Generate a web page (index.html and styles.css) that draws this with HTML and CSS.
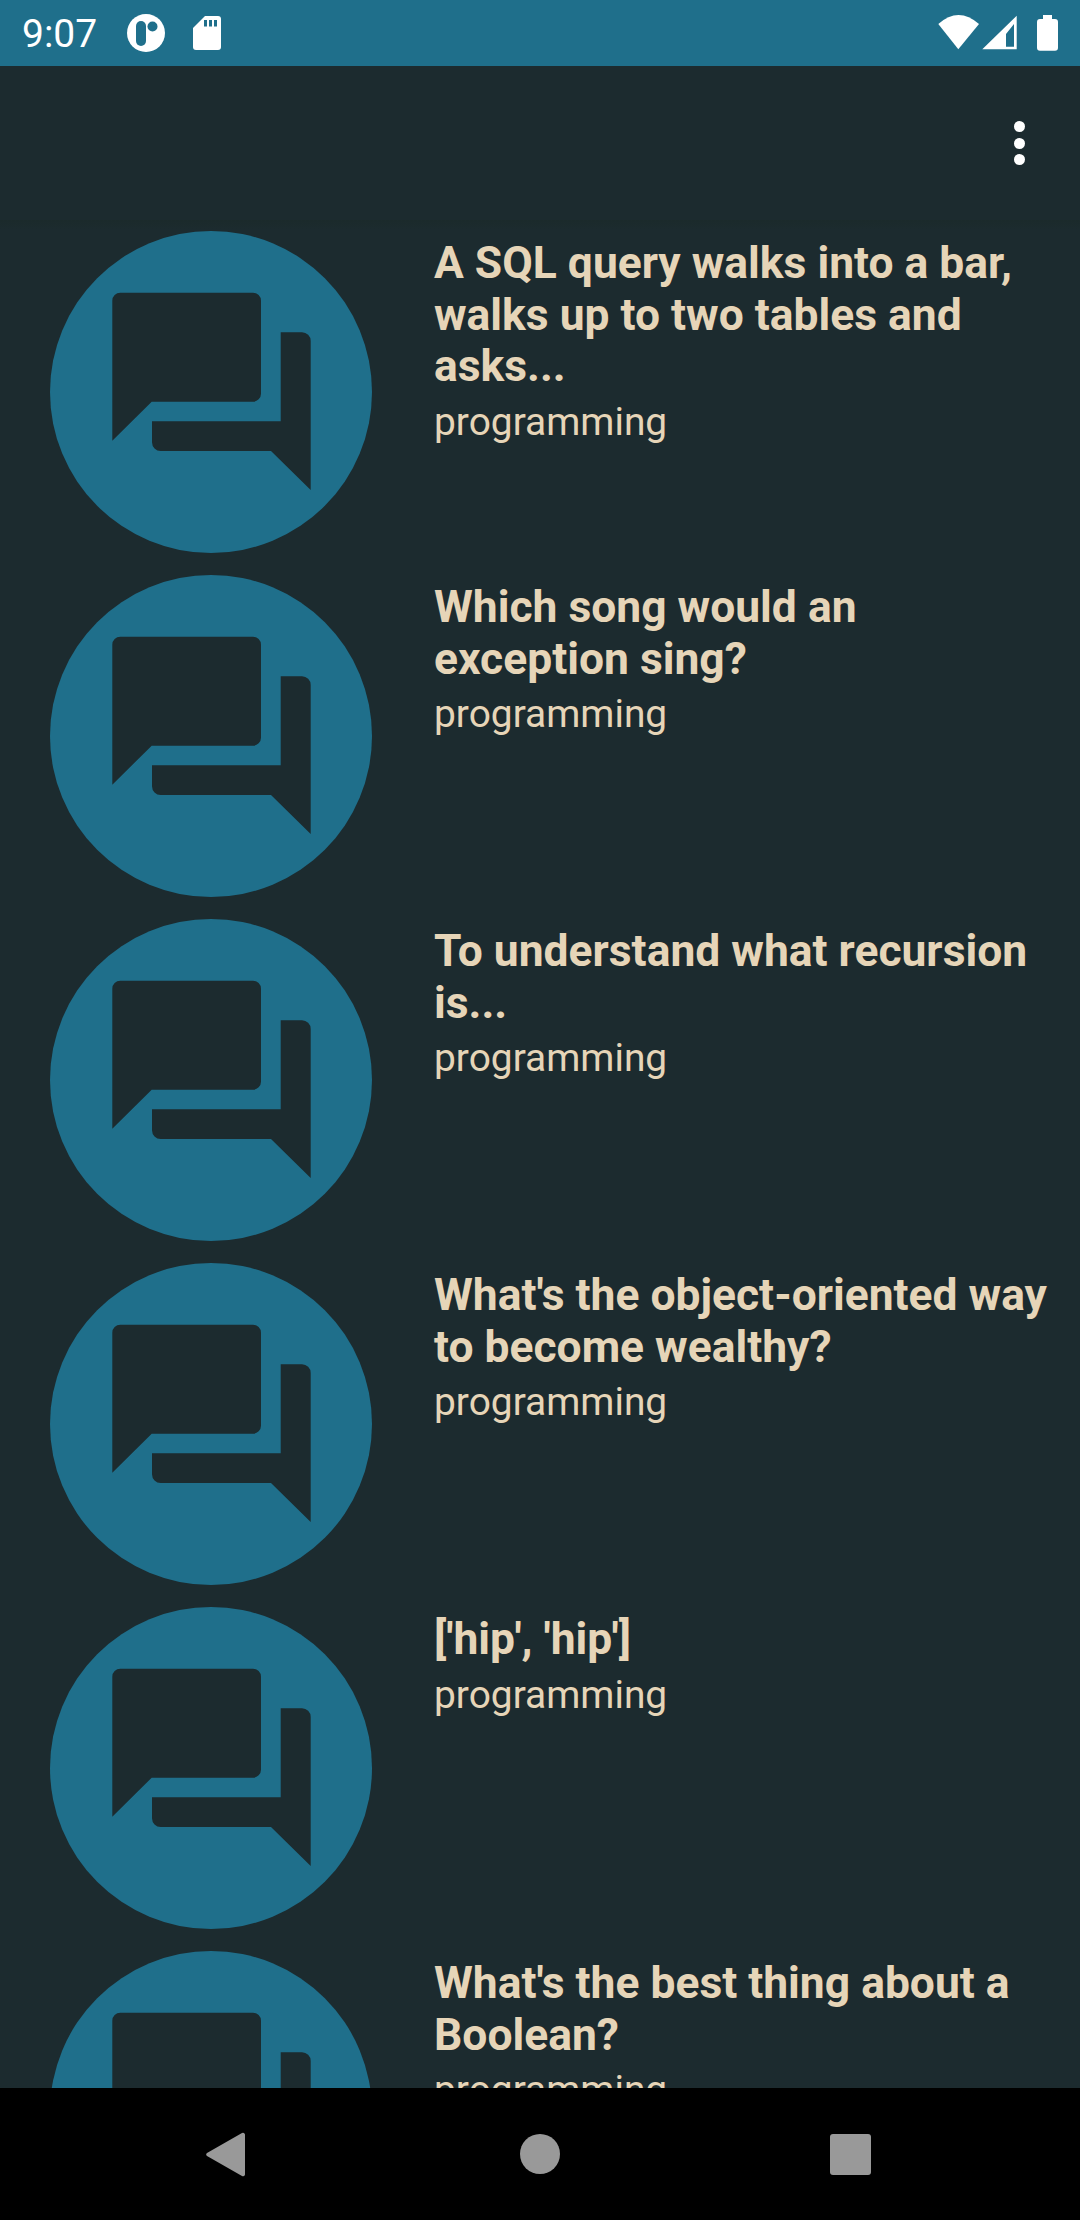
FILE: index.html
```html
<!DOCTYPE html>
<html lang="en">
<head>
<meta charset="utf-8">
<title>Jokes</title>
<link rel="stylesheet" href="styles.css">
</head>
<body>
<svg class="sprites" width="0" height="0" aria-hidden="true">
  <symbol id="bubbles" viewBox="0 0 322 322">
    <path d="M70.300 61.700H203a8 8 0 0 1 8 8V162.700a8 8 0 0 1-8 8H101.700L62.300 209.700V69.700a8 8 0 0 1 8-8Z"/>
    <path d="M230.700 101.300H252a8.700 8.700 0 0 1 8.700 8.700V259L221 220H110.700a8.700 8.700 0 0 1-8.700-8.700V190.300H230.700Z"/>
  </symbol>
</svg>
<div class="screen">
  <header class="status">
    <div class="status-left">
      <span class="clock">9:07</span>
      <svg class="ic-pocket" viewBox="0 0 38 38">
        <circle cx="19" cy="19" r="19" fill="#fff"/>
        <rect x="9" y="7" width="10" height="25" rx="5" fill="#1f6f8b"/>
        <circle cx="25.500" cy="12.500" r="5" fill="#1f6f8b"/>
      </svg>
      <svg class="ic-sd" viewBox="0 0 28 34">
        <path fill="#fff" d="M12 0H25a3 3 0 0 1 3 3V31a3 3 0 0 1-3 3H3a3 3 0 0 1-3-3V12Z"/>
        <path fill="#1f6f8b" d="M11 4h3v6.500h-3ZM16 4h3v6.500h-3ZM21 4h3v6.500h-3Z"/>
      </svg>
    </div>
    <svg class="ic-right" viewBox="0 0 122 38">
      <path fill="#fff" d="M2.300 10Q22.500-8 43 10L22.300 35.300Z"/>
      <path fill="#fff" fill-rule="evenodd" d="M46.300 35.300L80.700 1.700V35.300ZM70 20V32.700H78V10Z"/>
      <path fill="#fff" d="M107 1h9v4h3a3 3 0 0 1 3 3V33.700a3 3 0 0 1-3 3H104a3 3 0 0 1-3-3V8a3 3 0 0 1 3-3h3Z"/>
    </svg>
  </header>
  <div class="toolbar">
    <div class="overflow"><i></i><i></i><i></i></div>
  </div>
  <main class="list">
    <article class="item">
      <svg class="avatar"><use href="#bubbles"/></svg>
      <div class="text"><h2 class="title">A SQL query walks into a bar, walks up to two tables and asks...</h2><p class="tag">programming</p></div>
    </article>
    <article class="item">
      <svg class="avatar"><use href="#bubbles"/></svg>
      <div class="text"><h2 class="title">Which song would an exception sing?</h2><p class="tag">programming</p></div>
    </article>
    <article class="item">
      <svg class="avatar"><use href="#bubbles"/></svg>
      <div class="text"><h2 class="title">To understand what recursion is...</h2><p class="tag">programming</p></div>
    </article>
    <article class="item">
      <svg class="avatar"><use href="#bubbles"/></svg>
      <div class="text"><h2 class="title">What's the object-oriented way to become wealthy?</h2><p class="tag">programming</p></div>
    </article>
    <article class="item">
      <svg class="avatar"><use href="#bubbles"/></svg>
      <div class="text"><h2 class="title">['hip', 'hip']</h2><p class="tag">programming</p></div>
    </article>
    <article class="item">
      <svg class="avatar"><use href="#bubbles"/></svg>
      <div class="text"><h2 class="title">What's the best thing about a Boolean?</h2><p class="tag">programming</p></div>
    </article>
  </main>
  <nav class="navbar">
    <svg class="nav-back" viewBox="0 0 39 45"><path d="M36 1L1 21a2 2 0 0 0 0 3L36 44a2 2 0 0 0 3-1.500V2.500A2 2 0 0 0 36 1Z"/></svg>
    <span class="nav-home"></span>
    <span class="nav-recent"></span>
  </nav>
</div>
</body>
</html>
```
FILE: styles.css
```css
* { box-sizing: border-box; }
html, body { margin: 0; padding: 0; }
body { background: #1c2b2f; font-family: Roboto, "Liberation Sans", sans-serif; }
.sprites { position: absolute; }
.screen { width: 1080px; height: 2220px; display: flex; flex-direction: column; overflow: hidden; }

.status { height: 66px; flex: none; background: #1f6f8b; display: flex; align-items: center; justify-content: space-between; padding: 0 22px; position: relative; }
.status-left { display: flex; align-items: center; }
.clock { color: #fff; font-size: 39px; line-height: 66px; width: 105px; padding-top: 1px; }
.ic-pocket { width: 38px; height: 38px; display: block; margin-right: 28px; }
.ic-sd { width: 28px; height: 34px; display: block; }
.ic-right { width: 122px; height: 38px; display: block; }

.toolbar { height: 154px; flex: none; background: #1c2b2f; display: flex; justify-content: flex-end; padding: 55px 55px 0 0; position: relative; z-index: 1; }
.toolbar::after { content: ""; position: absolute; left: 0; right: 0; top: 100%; height: 10px; background: linear-gradient(#1b2a2b, #1c2b2f); }
.overflow { display: flex; flex-direction: column; gap: 5.500px; }
.overflow i { display: block; width: 11px; height: 11px; border-radius: 50%; background: #fff; }

.list { flex: 1; min-height: 0; overflow: hidden; }
.item { height: 344px; padding: 11px 30px 11px 50px; display: flex; gap: 62px; }
.avatar { width: 322px; height: 322px; flex: none; border-radius: 50%; background: #1f6f8b; fill: #1c2b2f; }
.text { flex: 1; min-width: 0; padding-top: 7px; }
.title { margin: 0; color: #e6d5b8; font-size: 44.400px; line-height: 51.560px; font-weight: 700; }
.tag { margin: 0; color: #e6d5b8; font-size: 38.900px; line-height: 57px; font-weight: 400; }

.navbar { height: 132px; flex: none; background: #000; position: relative; z-index: 2; display: flex; align-items: center; padding-left: 206px; }
.nav-back { width: 39px; height: 45px; fill: #999; display: block; }
.nav-home { width: 40px; height: 40px; border-radius: 50%; background: #999; display: block; margin-left: 275px; }
.nav-recent { width: 41px; height: 41px; border-radius: 3px; background: #999; display: block; margin-left: 270px; }
```
